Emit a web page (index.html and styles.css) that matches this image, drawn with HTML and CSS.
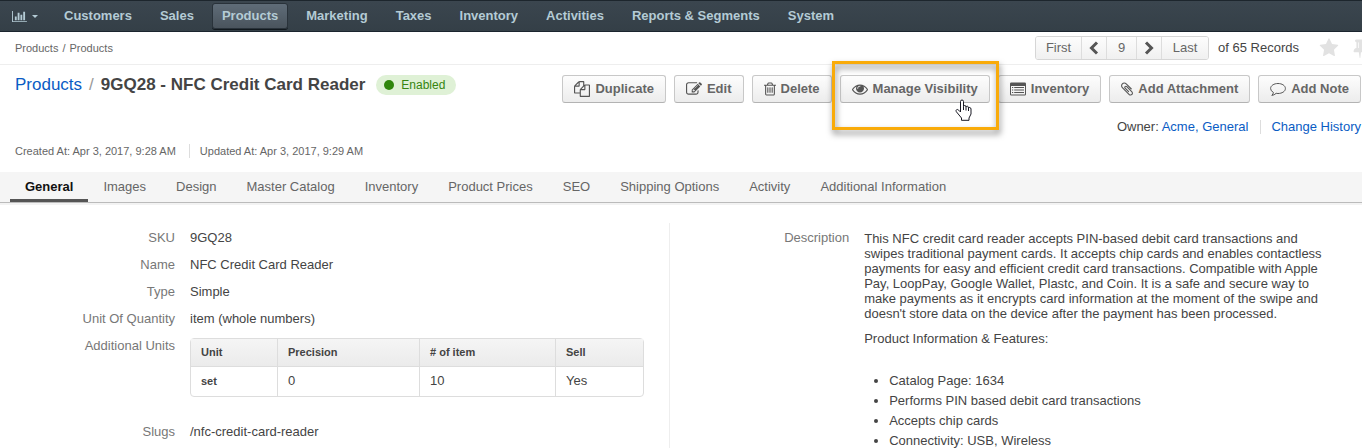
FILE: index.html
```html
<!DOCTYPE html>
<html lang="en">
<head>
<meta charset="utf-8">
<title>9GQ28 - NFC Credit Card Reader</title>
<link rel="stylesheet" href="styles.css">
</head>
<body>
<nav class="main-nav">
  <button class="dashboard-toggle" type="button" aria-label="Dashboards">
    <svg class="icon-chart" viewBox="0 0 2048 1792"><path d="M640 896v512h-256v-512h256zm384-512v1024h-256v-1024h256zm1024 1152v128h-2048v-1536h128v1408h1920zm-640-896v768h-256v-768h256zm384-384v1152h-256v-1152h256z"/></svg>
    <span class="caret"></span>
  </button>
  <a class="nav-item" href="#">Customers</a>
  <a class="nav-item" href="#">Sales</a>
  <a class="nav-item nav-item-active" href="#">Products</a>
  <a class="nav-item" href="#">Marketing</a>
  <a class="nav-item" href="#">Taxes</a>
  <a class="nav-item" href="#">Inventory</a>
  <a class="nav-item" href="#">Activities</a>
  <a class="nav-item" href="#">Reports &amp; Segments</a>
  <a class="nav-item" href="#">System</a>
</nav>

<div class="top-bar">
  <div class="breadcrumb"><a href="#">Products</a><span>/</span><a href="#">Products</a></div>
  <div class="top-tools">
    <div class="pager">
      <button type="button" class="pager-end">First</button>
      <button type="button" class="pager-arrow" aria-label="Previous"><svg viewBox="0 0 10 14"><path d="M8 1.5L2.5 7L8 12.5"/></svg></button>
      <input class="pager-page" type="text" value="9" aria-label="Record number">
      <button type="button" class="pager-arrow" aria-label="Next"><svg viewBox="0 0 10 14"><path d="M2 1.5L7.500 7L2 12.5"/></svg></button>
      <button type="button" class="pager-end">Last</button>
    </div>
    <span class="pager-total">of 65 Records</span>
    <button type="button" class="mark" aria-label="Favorite"><svg viewBox="0 0 1792 1792"><path d="M1728 647q0 22-26 48l-363 354 86 500q1 7 1 20 0 21-10.500 35.500t-30.500 14.500q-19 0-40-12l-449-236-449 236q-22 12-40 12-21 0-31.500-14.500t-10.500-35.500q0-6 2-20l86-500-364-354q-25-27-25-48 0-37 56-46l502-73 225-455q19-41 49-41t49 41l225 455 502 73q56 9 56 46z"/></svg></button>
    <button type="button" class="mark" aria-label="Pin"><svg viewBox="0 0 1792 1792"><path d="M800 864v-448q0-14-9-23t-23-9-23 9-9 23v448q0 14 9 23t23 9 23-9 9-23zm672 352q0 26-19 45t-45 19h-429l-51 483q-2 12-10.500 20.500t-20.500 8.500h-1q-27 0-32-27l-76-485h-404q-26 0-45-19t-19-45q0-123 78.500-221.500t177.500-98.500v-512q-52 0-90-38t-38-90 38-90 90-38h640q52 0 90 38t38 90-38 90-90 38v512q99 0 177.500 98.500t78.500 221.500z"/></svg></button>
  </div>
</div>

<header class="record-header">
  <div class="title-row">
    <h1 class="title"><a href="#">Products</a><span class="title-slash">/</span>9GQ28 - NFC Credit Card Reader</h1>
    <span class="status"><span class="status-dot"></span>Enabled</span>
    <div class="actions">
      <button type="button" class="btn"><svg class="icon" viewBox="0 0 1792 1792"><path d="M1696 384q40 0 68 28t28 68v1216q0 40-28 68t-68 28h-960q-40 0-68-28t-28-68v-288h-544q-40 0-68-28t-28-68v-672q0-40 20-88t48-76l408-408q28-28 76-48t88-20h416q40 0 68 28t28 68v328q68-40 128-40h416zm-544 213l-299 299h299v-299zm-640-384l-299 299h299v-299zm196 647l316-316v-416h-384v416q0 40-28 68t-68 28h-416v640h512v-256q0-40 20-88t48-76zm956 804v-1152h-384v416q0 40-28 68t-68 28h-416v640h896z"/></svg>Duplicate</button>
      <button type="button" class="btn"><svg class="icon" viewBox="0 0 1792 1792"><path d="M888 1184l116-116-152-152-116 116v56h96v96h56zm440-720q-16-16-33 1l-350 350q-17 17-1 33t33-1l350-350q17-17 1-33zm80 594v190q0 119-84.500 203.500t-203.500 84.500h-832q-119 0-203.500-84.500t-84.500-203.500v-832q0-119 84.500-203.500t203.500-84.500h832q63 0 117 25 15 7 18 23 3 17-9 29l-49 49q-14 14-32 8-23-6-45-6h-832q-66 0-113 47t-47 113v832q0 66 47 113t113 47h832q66 0 113-47t47-113v-126q0-13 9-22l64-64q15-15 35-7t20 29zm-96-738l288 288-672 672h-288v-288zm444 132l-92 92-288-288 92-92q28-28 68-28t68 28l152 152q28 28 28 68t-28 68z"/></svg>Edit</button>
      <button type="button" class="btn"><svg class="icon icon-narrow" viewBox="192 0 1408 1792"><path d="M704 736v576q0 14-9 23t-23 9h-64q-14 0-23-9t-9-23v-576q0-14 9-23t23-9h64q14 0 23 9t9 23zm256 0v576q0 14-9 23t-23 9h-64q-14 0-23-9t-9-23v-576q0-14 9-23t23-9h64q14 0 23 9t9 23zm256 0v576q0 14-9 23t-23 9h-64q-14 0-23-9t-9-23v-576q0-14 9-23t23-9h64q14 0 23 9t9 23zm128 724v-948h-896v948q0 22 7 40.500t14.500 27 10.500 8.500h832q3 0 10.500-8.500t14.500-27 7-40.500zm-672-1076h448l-48-117q-7-9-17-11h-317q-10 2-17 11zm928 32v64q0 14-9 23t-23 9h-96v948q0 83-47 143.500t-113 60.500h-832q-66 0-113-58.500t-47-141.500v-952h-96q-14 0-23-9t-9-23v-64q0-14 9-23t23-9h309l70-167q15-37 54-63t79-26h320q40 0 79 26t54 63l70 167h309q14 0 23 9t9 23z"/></svg>Delete</button>
      <div class="highlighted">
        <button type="button" class="btn"><svg class="icon" viewBox="0 0 1792 1792"><path d="M1664 960q-152-236-381-353 61 104 61 225 0 185-131.500 316.500t-316.500 131.500-316.500-131.500-131.500-316.500q0-121 61-225-229 117-381 353 133 205 333.500 326.500t434.500 121.500 434.500-121.500 333.500-326.500zm-720-384q0-20-14-34t-34-14q-125 0-214.500 89.500t-89.500 214.500q0 20 14 34t34 14 34-14 14-34q0-86 61-147t147-61q20 0 34-14t14-34zm848 384q0 34-20 69-140 230-376.500 368.500t-499.500 138.500-499.500-139-376.500-368q-20-35-20-69t20-69q140-229 376.500-368t499.500-139 499.500 139 376.500 368q20 35 20 69z"/></svg>Manage Visibility</button>
        <span class="highlight-frame"></span>
        <svg class="pointer" viewBox="0 0 17 22"><path d="M5.500 13V2.500Q5.500 1 7 1T8.500 2.500V7.500Q8.500 6.500 9.800 6.500T11 8Q11.200 7.200 12.300 7.200T13.500 9Q13.800 8.400 14.800 8.500T16 10V15L14 19V21.300H6.500V19L1.300 12.700Q.6 11.400 1.600 10.700T3.700 11.200Z"/><path d="M8.500 7.500V11M11 8V11.500M13.500 9V12"/></svg>
      </div>
      <button type="button" class="btn"><svg class="icon" viewBox="0 0 16 16"><path fill-rule="evenodd" d="M1.300 1.500H14.700Q16 1.500 16 2.800V13.200Q16 14.500 14.700 14.500H1.300Q0 14.500 0 13.200V2.800Q0 1.500 1.300 1.500ZM1 5V13.200Q1 13.500 1.300 13.500H14.700Q15 13.500 15 13.200V5ZM2 6H3.200V7H2ZM4.200 6H14V7H4.200ZM2 8.500H3.200V9.500H2ZM4.200 8.500H14V9.500H4.200ZM2 11H3.200V12H2ZM4.200 11H14V12H4.200Z"/></svg>Inventory</button>
      <button type="button" class="btn"><svg class="icon icon-narrow" viewBox="192 0 1408 1792"><path d="M1596 1385q0 117-79 196t-196 79q-135 0-235-100l-777-776q-113-115-113-271 0-159 110-270t269-111q158 0 273 113l605 606q10 10 10 22 0 16-30.500 46.500t-46.500 30.500q-13 0-23-10l-606-607q-79-77-181-77-106 0-179 75t-73 181q0 105 76 181l776 777q63 63 145 63 64 0 106-42t42-106q0-82-63-145l-581-581q-26-24-60-24-29 0-48 19t-19 48q0 32 25 59l410 410q10 10 10 22 0 16-31 47t-47 31q-12 0-22-10l-410-410q-63-61-63-149 0-82 57-139t139-57q88 0 149 63l581 581q100 98 100 235z"/></svg>Add Attachment</button>
      <button type="button" class="btn"><svg class="icon icon-line" viewBox="0 0 16 16"><path d="M8 2.500C12 2.500 15.400 4.600 15.400 7.500S12 12.500 8 12.500Q7 12.500 6.200 12.300Q4.200 14.200 1.800 14.400Q3.300 13 3.400 11.400Q.6 10 .6 7.500C.6 4.600 4 2.500 8 2.500Z"/></svg>Add Note</button>
    </div>
  </div>
  <div class="owner-row">
    <span>Owner: <a href="#">Acme, General</a></span>
    <a class="history" href="#">Change History</a>
  </div>
  <div class="dates"><span>Created At: Apr 3, 2017, 9:28 AM</span><span class="date-updated">Updated At: Apr 3, 2017, 9:29 AM</span></div>
</header>

<nav class="tabs">
  <a class="tab tab-active" href="#">General</a>
  <a class="tab" href="#">Images</a>
  <a class="tab" href="#">Design</a>
  <a class="tab" href="#">Master Catalog</a>
  <a class="tab" href="#">Inventory</a>
  <a class="tab" href="#">Product Prices</a>
  <a class="tab" href="#">SEO</a>
  <a class="tab" href="#">Shipping Options</a>
  <a class="tab" href="#">Activity</a>
  <a class="tab" href="#">Additional Information</a>
</nav>

<main class="details">
  <dl class="fields">
    <dt>SKU</dt><dd>9GQ28</dd>
    <dt>Name</dt><dd>NFC Credit Card Reader</dd>
    <dt>Type</dt><dd>Simple</dd>
    <dt>Unit Of Quantity</dt><dd>item (whole numbers)</dd>
    <dt>Additional Units</dt>
    <dd>
      <table class="units">
        <colgroup><col class="col-unit"><col class="col-precision"><col class="col-count"><col></colgroup>
        <thead><tr><th>Unit</th><th>Precision</th><th># of item</th><th>Sell</th></tr></thead>
        <tbody><tr><th>set</th><td>0</td><td>10</td><td>Yes</td></tr></tbody>
      </table>
    </dd>
    <dt>Slugs</dt><dd>/nfc-credit-card-reader</dd>
  </dl>
  <dl class="fields fields-right">
    <dt>Description</dt>
    <dd class="description">
      <p>This NFC credit card reader accepts PIN-based debit card transactions and swipes traditional payment cards. It accepts chip cards and enables contactless payments for easy and efficient credit card transactions. Compatible with Apple Pay, LoopPay, Google Wallet, Plastc, and Coin. It is a safe and secure way to make payments as it encrypts card information at the moment of the swipe and doesn't store data on the device after the payment has been processed.</p>
      <p>Product Information &amp; Features:</p>
      <ul>
        <li>Catalog Page: 1634</li>
        <li>Performs PIN based debit card transactions</li>
        <li>Accepts chip cards</li>
        <li>Connectivity: USB, Wireless</li>
      </ul>
    </dd>
  </dl>
</main>
</body>
</html>
```
FILE: styles.css
```css
* { box-sizing: border-box; }

body {
  margin: 0;
  overflow: hidden;
  background: #fff;
  color: #444;
  font: 13px/20px "Liberation Sans", Arial, sans-serif;
}

a { color: #0a5cc4; text-decoration: none; }

button, input { font: inherit; color: inherit; }

.main-nav {
  display: flex;
  align-items: center;
  gap: 8px;
  height: 32px;
  padding: 0 10px;
  background: linear-gradient(#3b464f, #343f47);
  border-top: 1px solid #1d262d;
  border-bottom: 1px solid #1b252e;
}

.dashboard-toggle {
  display: flex;
  align-items: center;
  gap: 5px;
  width: 36px;
  padding: 0 2px;
  border: 0;
  background: none;
  color: #b4cbd5;
}

.icon-chart { width: 15px; height: 13px; fill: currentColor; }

.caret {
  border: 3px solid transparent;
  border-top-color: currentColor;
  border-bottom: 0;
}

.nav-item {
  padding: 2px 9px;
  border: 1px solid transparent;
  border-radius: 3px;
  color: #b4cbd5;
  font-weight: bold;
}

.nav-item-active {
  background: linear-gradient(#5f6c78, #4a545d);
  border-color: #29323a;
  box-shadow: 0 1px 0 #11181d;
}

.top-bar {
  display: flex;
  align-items: center;
  justify-content: space-between;
  height: 33px;
  padding-left: 15px;
  border-bottom: 1px solid #eee;
}

.breadcrumb { display: flex; gap: 4px; font-size: 11px; color: #666; }
.breadcrumb a { color: #666; }

.top-tools { display: flex; align-items: center; margin-right: -19px; }

.pager {
  display: flex;
  height: 24px;
  border: 1px solid #d6d6d6;
  border-radius: 3px;
  overflow: hidden;
}

.pager button, .pager-page {
  padding: 0;
  border: 0;
  border-right: 1px solid #ddd;
  background: linear-gradient(#fdfdfd, #f0f0f0);
  color: #666;
  text-align: center;
}

.pager button:last-child { border-right: 0; }
.pager .pager-end { width: 46px; }
.pager .pager-arrow { display: flex; align-items: center; justify-content: center; width: 25px; }
.pager-arrow svg { width: 10px; height: 14px; fill: none; stroke: #555; stroke-width: 3; }
.pager-page { width: 30px; }
.pager-total { margin: 0 20px 0 9px; }

.mark { display: flex; margin-right: 11px; padding: 0; border: 0; background: none; }
.mark svg { width: 20px; height: 20px; fill: #e2e2e2; }

.record-header { padding: 10px 1px 14px 15px; }

.title-row { display: flex; align-items: flex-start; }

.title { margin: 0; font-size: 17px; line-height: 20px; }
.title a, .title-slash { font-weight: normal; }
.title-slash { margin: 0 7px; color: #999; }

.status {
  display: flex;
  align-items: center;
  gap: 7px;
  margin-left: 11px;
  padding: 0 11px 0 8px;
  border-radius: 10px;
  background: #dff1d6;
  color: #36850f;
  font-size: 12px;
}

.status-dot { width: 10px; height: 10px; border-radius: 50%; background: #2f860b; }

.actions { display: flex; gap: 8px; margin-left: auto; }

.btn {
  display: flex;
  align-items: center;
  gap: 5px;
  height: 28px;
  padding: 0 11px;
  border: 1px solid #c8c8c8;
  border-bottom-color: #b3b3b3;
  border-radius: 3px;
  background: linear-gradient(#fdfdfd, #ececec);
  color: #666;
  font-weight: bold;
  white-space: nowrap;
}

.icon { width: 16px; height: 16px; fill: #555; }
.icon-narrow { width: 12px; }
.icon-line { fill: none; stroke: #555; }

.highlighted { position: relative; }

.highlight-frame {
  position: absolute;
  inset: -14px -9px -27px -8px;
  border: 3px solid #f9ab0a;
  filter: drop-shadow(1px 4px 3px rgba(0, 0, 0, 0.5));
  pointer-events: none;
}

.pointer {
  position: absolute;
  right: 18px;
  top: 24px;
  width: 17px;
  height: 22px;
  fill: #fff;
  stroke: #1a1a24;
}

.owner-row {
  display: flex;
  justify-content: flex-end;
  margin-top: 14px;
}

.history { margin-left: 12px; padding-left: 10px; border-left: 1px solid #ddd; line-height: 14px; align-self: center; }

.dates { display: flex; margin-top: 7px; font-size: 11px; line-height: 14px; color: #666; }
.date-updated { margin-left: 13px; padding-left: 10px; border-left: 1px solid #ddd; }

.tabs {
  display: flex;
  padding: 0 10px;
  background: #f5f5f5;
  border-bottom: 1px solid #bbb;
  box-shadow: 0 2px 0 #f3f3f3;
}

.tab { padding: 5px 15px 2px; border-bottom: 3px solid transparent; color: #666; }
.tab-active { border-color: #555; color: #111; font-weight: bold; }

.details {
  display: grid;
  grid-template-columns: 29fr 30fr;
  padding: 20px 15px 0 14px;
}

.fields {
  display: grid;
  grid-template-columns: 160px 1fr;
  gap: 7px 15px;
  align-content: start;
  margin: 0;
  padding: 5px 25px 0 1px;
}

.fields-right { padding: 5px 10px 0 19px; border-left: 1px solid #eee; }
.fields dt { text-align: right; color: #777; }
.fields dd { margin: 0; }

.units {
  width: 100%;
  margin: 2px 0 18px;
  border: 1px solid #ddd;
  border-radius: 4px;
  border-spacing: 0;
  table-layout: fixed;
  text-align: left;
}

.units th, .units td { padding: 4px 10px 5px; border-left: 1px solid #ddd; vertical-align: baseline; }
.units th { font-size: 11px; }
.units th:first-child, .units td:first-child { border-left: 0; }
.units thead th { padding: 3px 10px 4px; background: linear-gradient(#f5f5f5, #ebebeb); border-bottom: 1px solid #ddd; }
.units tbody th { padding-bottom: 4px; }
.col-unit { width: 86px; }
.col-precision { width: 142px; }
.col-count { width: 136px; }

.description { padding-top: 3px; line-height: 15px; }
.description p { margin: 0 0 10px; }
.description ul { margin: 25px 0 0; padding-left: 25px; line-height: 20px; }
```
